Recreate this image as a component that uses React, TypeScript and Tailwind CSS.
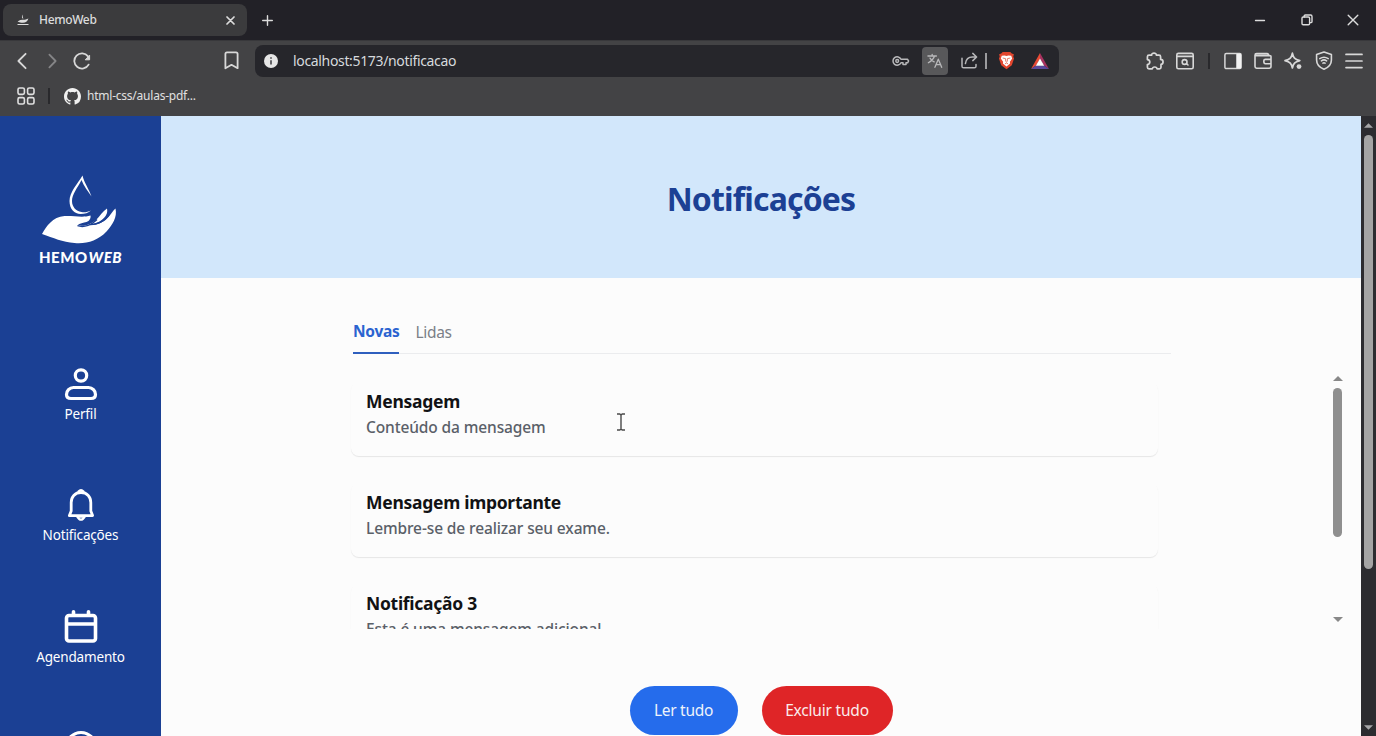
import type { ReactNode } from "react";

const messages = [
  { title: "Mensagem", body: "Conteúdo da mensagem" },
  { title: "Mensagem importante", body: "Lembre-se de realizar seu exame." },
  { title: "Notificação 3", body: "Esta é uma mensagem adicional." },
];

function Icon({ children, className, box = "0 0 20 20", w = 1.6 }: { children: ReactNode; className: string; box?: string; w?: number }) {
  return (
    <svg viewBox={box} className={className} fill="none" stroke="currentColor" strokeWidth={w} strokeLinecap="round" strokeLinejoin="round">
      {children}
    </svg>
  );
}

function TabStrip() {
  return (
    <div className="flex h-[40px] items-center bg-[#222127] text-[#dcdcdc]">
      <div className="ml-[3px] flex h-8 w-[244px] items-center rounded-lg bg-[#3b3b3d]">
        <svg viewBox="0 0 12 12" className="ml-[14px] size-3 shrink-0" fill="#dcdcdc">
          <path d="M6 0.5C4.8 2 4.5 3.4 5.6 4.6L6.4 4.4C5.6 3 5.6 1.8 6 0.5Z" />
          <path d="M0.6 8C2 6 4 5.8 8 5.8L11.4 4.6C10.4 7.6 8.6 8.8 6 8.8C4 8.8 2 8.6 0.6 8ZM0.5 10h11v1h-11Z" />
        </svg>
        <span className="ml-[10px] flex-1 text-[12px] font-medium tracking-[-0.35px]">HemoWeb</span>
        <Icon className="mr-[12px] size-[9px]" box="0 0 9 9" w={1.7}>
          <path d="M1 1l7 7M8 1L1 8" />
        </Icon>
      </div>
      <Icon className="ml-[15px] size-[11px]" box="0 0 11 11" w={1.4}>
        <path d="M5.5 0.7v9.6M0.7 5.5h9.6" />
      </Icon>
      <div className="ml-auto flex items-center pr-[17px]">
        <Icon className="size-[12px]" box="0 0 12 12" w={1.3}>
          <path d="M1.5 6.5h9" />
        </Icon>
        <Icon className="ml-[35px] size-[12px]" box="0 0 12 12" w={1.4}>
          <rect x="1" y="3" width="7.6" height="7.8" rx="1.2" />
          <path d="M3.2 3V2.2Q3.2 1 4.4 1H9.6Q11 1 11 2.4V7.4Q11 8.6 9.8 8.6H8.6" />
        </Icon>
        <Icon className="ml-[34px] size-[12px]" box="0 0 12 12" w={1.4}>
          <path d="M1.2 1.2l9.6 9.6M10.8 1.2l-9.6 9.6" />
        </Icon>
      </div>
    </div>
  );
}

function AddressBar() {
  return (
    <div className="flex h-8 w-[804px] shrink-0 items-center rounded-lg bg-[#26262b] text-[#b8b8ba]">
      <svg viewBox="0 0 14 14" className="ml-[9px] size-[14px]">
        <circle cx="7" cy="7" r="7" fill="#e6e6e6" />
        <path d="M7 3.2v1.6M7 6.2v4.4" stroke="#55555a" strokeWidth="1.8" />
      </svg>
      <span className="ml-[15px] flex-1 text-[14px] tracking-[-0.34px] text-[#d6dadd]">localhost:5173/notificacao</span>
      <Icon className="h-[12px] w-[18px]" box="0 0 18 12" w={1.5}>
        <path d="M9 4.2A4.2 4.2 0 1 0 9 7.8H11V9.6H14V7.8H15.6L16.6 6L15.4 4.2Z" />
        <circle cx="5.2" cy="6" r="1.4" />
      </Icon>
      <div className="ml-[12px] flex h-7 w-[26px] items-center justify-center rounded bg-[#58585a]">
        <Icon className="size-[16px]" box="0 0 17 17" w={1.4}>
          <path d="M1 3.2h9M5.5 1.4v1.8M8 3.2C7 6.4 4.4 8.8 1.4 10.4M3.2 5.4C4.4 7.4 6 8.6 7.6 9.4M8.4 15.2L12 6.6l3.6 8.6M9.6 12.4h4.8" />
        </Icon>
      </div>
      <Icon className="ml-[13px] size-[17px]" box="0 0 17 17" w={1.5}>
        <path d="M1 6.2V14.2Q1 15.8 2.6 15.8H13.4Q15 15.8 15 14.2V12.4M4.4 11.6C5 7.2 8 5 11.4 5H15.4M11.8 1.4L15.6 5L11.8 8.6" />
      </Icon>
      <span className="ml-[7px] h-4 w-[2px] bg-[#9b9b9e]" />
      <svg viewBox="0 0 18 20" className="ml-[11px] h-[19px] w-[17px]">
        <path d="M5 1H13L14.6 2.6L16.8 3.4L16.2 6L17 8L14.6 15L9 19.2L3.4 15L1 8L1.8 6L1.2 3.4L3.4 2.6Z" fill="#e2462e" />
        <path d="M4 5L7 4.6L9 5.2L11 4.6L14 5L15 8L12.6 11.4L12.8 13.2L9 16.4L5.2 13.2L5.4 11.4L3 8Z" fill="#fff" />
        <path d="M5 7.4L8 8L8.2 11L9 11.6L9.8 11L10 8L13 7.4M7.4 13.6L9 12.6L10.6 13.6" fill="none" stroke="#e8745f" strokeWidth="1" />
      </svg>
      <svg viewBox="0 0 18 16" className="mr-[10px] ml-[16px] h-[16px] w-[18px]">
        <path d="M9 0L0 16L5 12.6L9 6Z" fill="#e84a35" />
        <path d="M9 0L18 16L13 12.6L9 6Z" fill="#a8325f" />
        <path d="M0 16L5 12.6H13L18 16Z" fill="#5a4a9c" />
        <path d="M9 5.6L4.8 12.8H13.2Z" fill="#fff" />
      </svg>
    </div>
  );
}

function Toolbar() {
  return (
    <div className="flex h-[39px] items-center text-[#d8d8d8]">
      <Icon className="ml-[16px] size-[18px] shrink-0" box="0 0 18 18" w={1.8}>
        <path d="M9.6 1.8L2.4 9l7.2 7.2" />
      </Icon>
      <Icon className="ml-[9px] size-[18px] shrink-0 text-[#858587]" box="0 0 18 18" w={1.8}>
        <path d="M6.4 2.6L12.6 9l-6.2 6.4" />
      </Icon>
      <Icon className="ml-[12px] size-[18px] shrink-0" box="0 0 18 18" w={1.8}>
        <path d="M15.6 12.6A7.6 7.6 0 1 1 15 4.4" />
        <path d="M16.6 3.6V7.8H12.6Z" fill="currentColor" strokeWidth="1" />
      </Icon>
      <Icon className="ml-[133px] h-[19px] w-[15px] shrink-0" box="0 0 15 19" w={1.8}>
        <path d="M1.4 3Q1.4 1.4 3 1.4H12Q13.6 1.4 13.6 3V17.2L7.5 13.8L1.4 17.2Z" />
      </Icon>
      <div className="ml-[16px]">
        <AddressBar />
      </div>
      <Icon className="ml-[87px] size-[18px] shrink-0" box="0 0 18 18" w={1.7}>
        <path d="M1.4 4.8Q1.4 3.2 3 3.2H5.6C5.4 0.4 10.6 0.4 10.4 3.2H13Q14.6 3.2 14.6 4.8V7.4C17.8 7.4 17.8 12.2 15 12.4V15.2Q15 16.8 13.4 16.8H11C10.8 14.4 6.6 14.4 6.4 16.8H3Q1.4 16.8 1.4 15.2V12.6C4.6 12 4.6 8 1.4 7.6Z" />
      </Icon>
      <Icon className="ml-[12px] size-[18px] shrink-0" box="0 0 18 18" w={1.6}>
        <rect x="0.8" y="1.4" width="16.4" height="15.4" rx="1.6" />
        <path d="M1 4.4h16" />
        <circle cx="8.6" cy="10" r="2.4" />
        <path d="M10.4 11.6l1.6 1.4" />
      </Icon>
      <span className="ml-[14px] h-4 w-[2px] bg-[#29292c]" />
      <Icon className="ml-[14px] size-[18px] shrink-0" box="0 0 18 18" w={1.5}>
        <rect x="0.9" y="1.6" width="16.2" height="15" rx="1.4" />
        <path d="M13 2.4h3.4v13.4H13Z" fill="#f2f2f2" stroke="#f2f2f2" />
      </Icon>
      <Icon className="ml-[12px] size-[18px] shrink-0" box="0 0 18 18" w={1.6}>
        <path d="M17 6V4.6Q17 3.6 15.6 3.6H1.4M14.6 3.4Q14.6 1.6 13 1.6H2.6Q1 1.6 1 3.2V14.6Q1 16.2 2.6 16.2H15.4Q17 16.2 17 14.6V6M17 7.4H11.4Q9.8 7.4 9.8 9Q9.8 11.8 11.4 11.8H17" />
      </Icon>
      <Icon className="ml-[12px] size-[18px] shrink-0" box="0 0 18 18" w={1.7}>
        <path d="M8.4 1.2C9.4 5.8 10.6 7 15.8 8.6C10.6 10 9.4 11.4 8.4 16C7.4 11.4 6.2 10 1 8.6C6.2 7 7.4 5.8 8.4 1.2Z" />
        <circle cx="15" cy="14.6" r="2.4" fill="currentColor" stroke="none" />
      </Icon>
      <Icon className="ml-[13px] h-[19px] w-[18px] shrink-0" box="0 0 18 19" w={1.6}>
        <path d="M9 1L16.4 3.6V9C16.4 13.4 13 16.6 9 18.2C5 16.6 1.6 13.4 1.6 9V3.6Z" />
        <path d="M4.8 7.6Q9 4.8 13.2 7.6M6.4 9.8Q9 8 11.6 9.8M8 12.2Q9 11.4 10 12.2" />
      </Icon>
      <Icon className="ml-[12px] h-[16px] w-[18px] shrink-0" box="0 0 18 16" w={1.7}>
        <path d="M1 1.4h16M1 8h16M1 14.6h16" />
      </Icon>
    </div>
  );
}

function Bookmarks() {
  return (
    <div className="flex h-[35px] items-center pb-[3px] text-[#e0e0e0]">
      <Icon className="ml-[17px] size-[18px]" box="0 0 18 18" w={1.6}>
        <rect x="1" y="1" width="6.400" height="6.400" rx="1.600" />
        <rect x="10.600" y="1" width="6.400" height="6.400" rx="1.600" />
        <rect x="1" y="10.600" width="6.400" height="6.400" rx="1.600" />
        <rect x="10.600" y="10.600" width="6.400" height="6.400" rx="1.600" />
      </Icon>
      <span className="ml-[13px] h-4 w-[2px] bg-[#29292c]" />
      <svg viewBox="0 0 16 16" className="ml-[14px] size-[17px]" fill="#f0f0f0">
        <path d="M8 0C3.58 0 0 3.58 0 8c0 3.54 2.29 6.53 5.47 7.59.4.07.55-.17.55-.38 0-.19-.01-.82-.01-1.49-2.01.37-2.53-.49-2.69-.94-.09-.23-.48-.94-.82-1.13-.28-.15-.68-.52-.01-.53.63-.01 1.08.58 1.23.82.72 1.21 1.87.87 2.33.66.07-.52.28-.87.51-1.07-1.78-.2-3.64-.89-3.64-3.95 0-.87.31-1.59.82-2.15-.08-.2-.36-1.02.08-2.12 0 0 .67-.21 2.2.82.64-.18 1.32-.27 2-.27s1.36.09 2 .27c1.53-1.04 2.2-.82 2.2-.82.44 1.1.16 1.92.08 2.12.51.56.82 1.27.82 2.15 0 3.07-1.87 3.75-3.65 3.95.29.25.54.73.54 1.48 0 1.07-.01 1.93-.01 2.2 0 .21.15.46.55.38A8.01 8.01 0 0 0 16 8c0-4.42-3.58-8-8-8Z" />
      </svg>
      <span className="ml-[6px] text-[12px] tracking-[-0.23px]">html-css/aulas-pdf...</span>
    </div>
  );
}

function NavItem({ label, children }: { label?: string; children: ReactNode }) {
  return (
    <a className="flex h-[121.5px] shrink-0 flex-col items-center">
      <Icon className="size-9" box="0 0 36 36" w={3.2}>{children}</Icon>
      {label && <span className="mt-[2px] text-[13.5px] leading-5 tracking-[-0.16px]">{label}</span>}
    </a>
  );
}

function Sidebar() {
  return (
    <aside className="flex w-[161px] shrink-0 flex-col items-center overflow-hidden bg-[#1b4094] pt-[59px] text-white">
      <svg viewBox="41.5 175 78 70" className="h-[70px] w-[78px] shrink-0" fill="#fff">
        <path d="M82 175.500C77 184 69 192 69 201C69 209 74 214 80 214C84 214 88 213 90.500 210.500C87 212.300 84 212.600 81 212C75.500 211 71.500 207 71.500 201C71.500 194 77 188 81 180C83 186 87.500 191 91 196.500C88.500 189 83.500 182.500 82 175.500Z" />
        <path d="M41.500 234C46 226 52 217 64 216C73 215.500 82 218 90 215.500C90.500 218 89 221 86 222C83 223 79 223 77 225.300C84 227 91 224 96 219.500C99.500 216 102 211.500 106.500 208.500C107.500 213 105.500 216.500 101.500 219.800C98.500 222.300 94 223.500 90 224.500C98 225.500 104 221.500 108 217C110.500 214 112.500 210.500 115 208.500C117 217 112 225 106 231.500C97 241 86 244 74 243C62 242 53 238 41.500 234Z" />
        <path d="M77 225.600C84 228 91.500 224.500 96.500 219.500" fill="none" stroke="#1b4094" strokeWidth="1.500" />
        <path d="M89 224.600C98 225 104 220.500 108.500 215" fill="none" stroke="#1b4094" strokeWidth="1.400" />
      </svg>
      <div className="mt-[2px] flex h-5 shrink-0 items-center gap-[1px] font-['Lato'] text-[15px] font-black tracking-[0.5px]">
        <span>HEMO</span>
        <span className="italic">WEB</span>
      </div>
      <nav className="mt-[98.5px] flex flex-col">
        <NavItem label="Perfil">
          <circle cx="18" cy="9.500" r="5.700" />
          <path d="M10.500 21.500H25.500C29.500 21.500 32.500 25 32.500 28.500Q32.500 32.500 28 32.500H8Q3.500 32.500 3.500 28.500C3.500 25 6.500 21.500 10.500 21.500Z" />
        </NavItem>
        <NavItem label="Notificações">
          <path d="M18 5.500C11.800 5.500 8.200 10 8.200 15.500V24L6.400 28.600H29.600L27.800 24V15.500C27.800 10 24.200 5.500 18 5.500Z" strokeWidth="2.800" />
          <path d="M15.500 5.500V4.500Q18 1.600 20.500 4.500V5.500" strokeWidth="2.200" />
          <path d="M14.200 29.600Q18 35.800 21.800 29.600Z" strokeWidth="2.200" />
        </NavItem>
        <NavItem label="Agendamento">
          <rect x="3.500" y="6.500" width="29" height="25.500" rx="2.500" strokeWidth="3.600" />
          <path d="M4 15h28M10.500 2.800v3M25.500 2.800v3" strokeWidth="3.600" />
        </NavItem>
        <NavItem>
          <circle cx="18" cy="17" r="14.500" />
        </NavItem>
      </nav>
    </aside>
  );
}

function Arrow({ up, className }: { up?: boolean; className: string }) {
  return (
    <svg viewBox="0 0 10 5" className={className} fill="currentColor">
      <path d={up ? "M5 0L10 5H0Z" : "M5 5L10 0H0Z"} />
    </svg>
  );
}

function Notifications() {
  return (
    <main className="relative flex min-w-0 flex-1 flex-col overflow-hidden bg-[#fcfcfc]">
      <header className="flex h-[162px] shrink-0 items-center justify-center bg-[#d2e7fb] pt-[3px]">
        <h1 className="text-[32px] leading-[40px] font-bold tracking-[-0.85px] text-[#1c4094]">Notificações</h1>
      </header>
      <div className="mr-[190px] ml-[192px] flex h-[76px] shrink-0 items-end gap-4 border-b border-[#ebecee]">
        <button className="-mb-px h-[35px] border-b-2 border-[#2f5fbe] pb-[8px] text-[15.500px] font-bold tracking-[-0.3px] text-[#2b63d0]">Novas</button>
        <button className="h-[33px] pb-[8px] text-[15.500px] tracking-[-0.3px] text-[#7b8088]">Lidas</button>
      </div>
      <div className="mt-[18px] mr-[16px] ml-[182px] flex h-[257px] shrink-0">
        <div className="flex flex-1 flex-col gap-[27px] overflow-hidden pt-[10px] pl-2">
          {messages.map((m) => (
            <article key={m.title} className="flex h-[74px] w-[807px] shrink-0 flex-col rounded-lg px-[15px] pt-[7px] shadow-[0_1px_1px_rgba(0,0,0,0.09)]">
              <h2 className="text-[17.500px] leading-[24px] font-bold tracking-[-0.280px] text-[#111214]">{m.title}</h2>
              <p className="mt-[2px] text-[15.500px] leading-[24px] font-medium tracking-[-0.120px] text-[#5a6068]">{m.body}</p>
            </article>
          ))}
        </div>
        <div className="flex w-[15px] flex-col items-center pt-[4px] text-[#888]">
          <Arrow up className="h-[5px] w-[10px]" />
          <div className="mt-[7px] h-[149px] w-[9px] rounded-full bg-[#8f8f8f]" />
          <Arrow className="mt-auto mb-[7px] h-[5px] w-[10px]" />
        </div>
      </div>
      <svg viewBox="0 0 10 18" className="absolute top-[297px] left-[455px] h-[18px] w-[10px]" fill="none" stroke="#4a4a4a" strokeWidth="1.400">
        <path d="M1 1H3.800L5 2L6.200 1H9M5 2V16M1 17H3.800L5 16L6.200 17H9" />
      </svg>
      <div className="mt-[57px] flex shrink-0 justify-center gap-6">
        <button className="h-[49px] w-[108px] rounded-full bg-[#256cec] pt-px text-[15.500px] tracking-[-0.3px] text-[#eef3fa]">Ler tudo</button>
        <button className="h-[49px] w-[131px] rounded-full bg-[#df2527] pt-px text-[15.500px] tracking-[-0.2px] text-[#faecec]">Excluir tudo</button>
      </div>
    </main>
  );
}

export default function App() {
  return (
    <div className="flex h-[736px] w-[1376px] flex-col overflow-hidden font-['Noto_Sans',sans-serif]">
      <TabStrip />
      <div className="h-[76px] shrink-0 border-t border-[#38383b] bg-[#434345]">
        <Toolbar />
        <Bookmarks />
      </div>
      <div className="flex h-[620px]">
        <Sidebar />
        <Notifications />
        <div className="flex w-[15px] flex-col items-center bg-[#2c2c30] pt-[7px] text-[#a5a5a7]">
          <Arrow up className="h-[5px] w-[9px]" />
          <div className="mt-[7px] h-[434px] w-[9px] rounded-full bg-[#a4a4a4]" />
          <Arrow className="mt-auto mb-[6px] h-[5px] w-[9px]" />
        </div>
      </div>
    </div>
  );
}
